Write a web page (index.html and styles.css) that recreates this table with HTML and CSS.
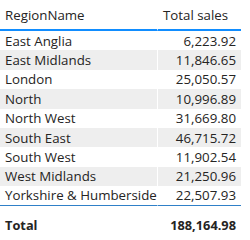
FILE: index.html
```html
<!DOCTYPE html>
<html>
<head>
<meta charset="utf-8">
<link rel="stylesheet" href="styles.css">
</head>
<body>
<table class="tbl">
  <colgroup><col class="c1"><col class="c2"></colgroup>
  <thead>
    <tr><th class="h1">RegionName</th><th>Total sales</th></tr>
  </thead>
  <tbody>
    <tr><td>East Anglia</td><td class="num">6,223.92</td></tr>
    <tr class="alt"><td>East Midlands</td><td class="num">11,846.65</td></tr>
    <tr><td>London</td><td class="num">25,050.57</td></tr>
    <tr class="alt"><td>North</td><td class="num">10,996.89</td></tr>
    <tr><td>North West</td><td class="num">31,669.80</td></tr>
    <tr class="alt"><td>South East</td><td class="num">46,715.72</td></tr>
    <tr><td>South West</td><td class="num">11,902.54</td></tr>
    <tr class="alt"><td>West Midlands</td><td class="num">21,250.96</td></tr>
    <tr><td>Yorkshire &amp; Humberside</td><td class="num">22,507.93</td></tr>
  </tbody>
  <tfoot>
    <tr><td>Total</td><td class="num">188,164.98</td></tr>
  </tfoot>
</table>
</body>
</html>
```
FILE: styles.css
```css
html, body { margin: 0; padding: 0; background: #fff; }
body { font-family: "Open Sans", "Noto Sans", sans-serif; font-size: 13.3px; color: #252423; }
.tbl { border-collapse: separate; border-spacing: 0; width: 241px; table-layout: fixed; }
.c1 { width: 158px; }
th, td { box-sizing: border-box; }
th { font-weight: normal; text-align: left; padding: 0 5px; height: 31px; border-bottom: 2px solid #118dff; vertical-align: middle; }
th.h1 { border-right: 1px solid #fff; }
td { height: 19.4px; padding: 0 5px; white-space: nowrap; line-height: 18px; }
.num { text-align: right; }
tbody tr.alt td { background: #eeeeee; }
tbody td:first-child { border-right: 1px solid #fff; }
tbody tr:last-child td { border-bottom: 1px solid #2f80c8; height: 19.6px; }
tfoot td { font-weight: bold; font-size: 12.8px; height: 34px; padding-top: 10px; vertical-align: top; }
```
